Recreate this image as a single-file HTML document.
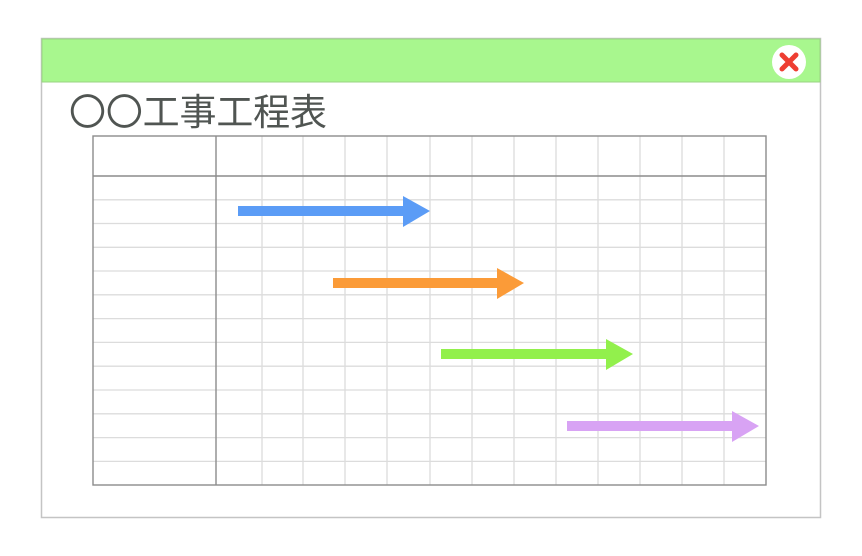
<!DOCTYPE html>
<html><head><meta charset="utf-8"><style>
body{margin:0;width:862px;height:556px;background:#fff;overflow:hidden;font-family:"Liberation Sans","Noto Sans CJK JP",sans-serif}
</style></head><body>
<svg width="862" height="556" style="position:absolute;left:0;top:0">
<rect x="41.5" y="38.5" width="779" height="479" fill="#fff" stroke="#c4c4c4" stroke-width="1.5"/>
<rect x="42" y="39" width="778" height="43" fill="#a8f78e" stroke="#9ad383" stroke-width="1"/>
<circle cx="789" cy="62" r="17" fill="#fff"/>
<path d="M782 55 L796 69 M796 55 L782 69" stroke="#ee3e32" stroke-width="5" stroke-linecap="round"/>
<text x="69" y="125" font-size="37" fill="#505552" font-family="'Noto Sans CJK JP',sans-serif" textLength="258">〇〇工事工程表</text>
<g stroke="#dcdcdc" stroke-width="1.3">
<line x1="262" y1="136" x2="262" y2="485"/><line x1="303" y1="136" x2="303" y2="485"/><line x1="345" y1="136" x2="345" y2="485"/><line x1="387" y1="136" x2="387" y2="485"/><line x1="430" y1="136" x2="430" y2="485"/><line x1="472" y1="136" x2="472" y2="485"/><line x1="514" y1="136" x2="514" y2="485"/><line x1="556" y1="136" x2="556" y2="485"/><line x1="598" y1="136" x2="598" y2="485"/><line x1="640" y1="136" x2="640" y2="485"/><line x1="682" y1="136" x2="682" y2="485"/><line x1="724" y1="136" x2="724" y2="485"/>
<line x1="93" y1="199.8" x2="766" y2="199.8"/><line x1="93" y1="223.5" x2="766" y2="223.5"/><line x1="93" y1="247.3" x2="766" y2="247.3"/><line x1="93" y1="271" x2="766" y2="271"/><line x1="93" y1="294.8" x2="766" y2="294.8"/><line x1="93" y1="318.6" x2="766" y2="318.6"/><line x1="93" y1="342.4" x2="766" y2="342.4"/><line x1="93" y1="366.2" x2="766" y2="366.2"/><line x1="93" y1="390" x2="766" y2="390"/><line x1="93" y1="413.8" x2="766" y2="413.8"/><line x1="93" y1="437.6" x2="766" y2="437.6"/><line x1="93" y1="461.4" x2="766" y2="461.4"/>
</g>
<g stroke="#8c8c8c" stroke-width="1.4" fill="none">
<rect x="93" y="136" width="673" height="349"/>
<line x1="216" y1="136" x2="216" y2="485"/>
<line x1="93" y1="176" x2="766" y2="176"/>
</g>
<path d="M238 206 H403 V196 L430 211 L403 227 V216 H238Z" fill="#5b9cf6"/>
<path d="M333 278 H497 V268 L524 283 L497 299 V288 H333Z" fill="#fb9b38"/>
<path d="M441 349 H606 V339 L633 354 L606 370 V359 H441Z" fill="#92f04c"/>
<path d="M567 421 H732 V411 L759 426 L732 442 V431 H567Z" fill="#d8a3f4"/>
</svg>
</body></html>
